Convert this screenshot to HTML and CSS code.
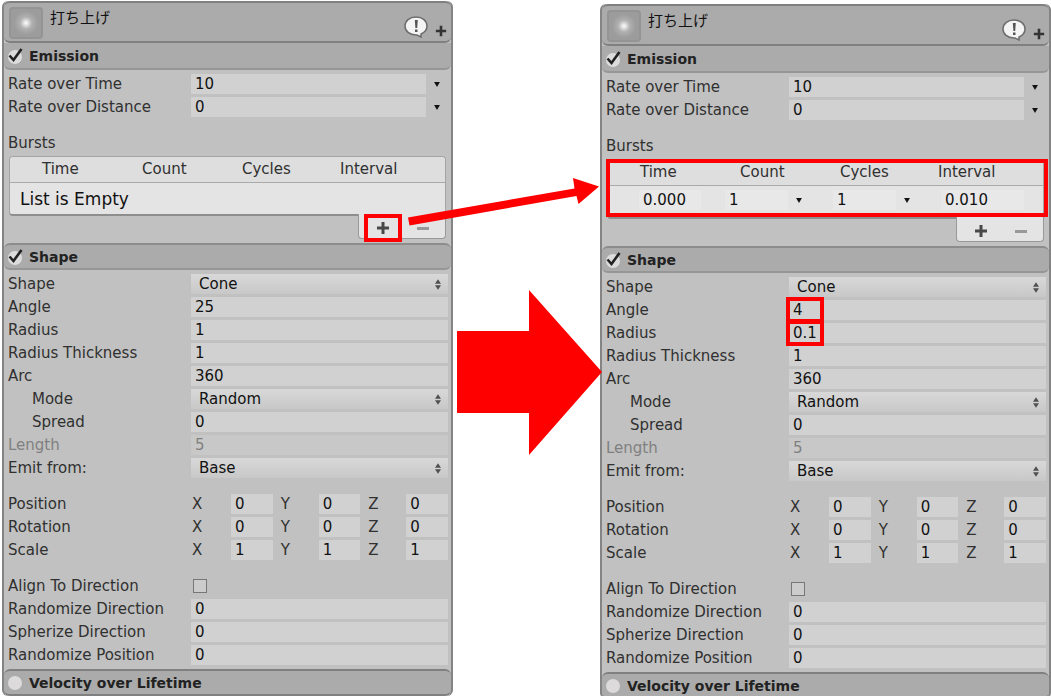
FILE: index.html
```
<!DOCTYPE html>
<html lang="ja">
<head>
    <meta charset="utf-8">
    <title>打ち上げ</title>
    <meta name="viewport" content="width=device-width, initial-scale=1">
    <link rel="stylesheet" href="styles.css">
</head>
<body>
    <svg class="defs" aria-hidden="true">
        <symbol id="updown" viewBox="0 0 7 12"><path d="M3.5 0 7 5H0zM0 7h7L3.5 12z"/></symbol>
        <symbol id="down" viewBox="0 0 7 6"><path d="M0 0h7L3.5 6z"/></symbol>
        <symbol id="plus" viewBox="0 0 14 14"><path d="M5.5 1h3v4.5H13v3H8.5V13h-3V8.5H1v-3h4.5z"/></symbol>
        <symbol id="minus" viewBox="0 0 14 14"><path d="M1 6h12v3H1z"/></symbol>
        <symbol id="info" viewBox="0 0 24 22">
            <path d="M12 1C5.500 1 1 5 1 10s4.500 9 11 9h1l4 2v-3c3.500-1.500 6-4.500 6-8 0-5-4.500-9-11-9z" fill="#f4f4f4" stroke="#6c6c6c" stroke-width="1.500"/>
            <path d="M10.800 4h3l-.6 8h-1.800zM11 13.500h2.500V16H11z" fill="#555"/>
        </symbol>
        <symbol id="check" viewBox="0 0 16 16">
            <circle cx="7" cy="9" r="7" fill="#dcdcdc"/>
            <path d="M1.500 7.500 5.500 12 13.500 1" fill="none" stroke="#222" stroke-width="2.600"/>
        </symbol>
    </svg>

    <main class="compare">
    <section class="panel">
        <header class="head">
            <div class="thumb"></div>
            <h1>打ち上げ</h1>
            <button type="button" class="icon" aria-label="Info"><svg width="24" height="22"><use href="#info"/></svg></button>
            <button type="button" class="icon add" aria-label="Add module"><svg width="12" height="12"><use href="#plus"/></svg></button>
        </header>

        <label class="title"><input type="checkbox" checked><svg class="mark"><use href="#check"/></svg>Emission</label>
        <div class="rows">
            <div class="row"><label for="a-rate">Rate over Time</label><div class="curve"><input id="a-rate" value="10"><button type="button" class="icon" aria-label="Mode"><svg width="6" height="5"><use href="#down"/></svg></button></div></div>
            <div class="row"><label for="a-dist">Rate over Distance</label><div class="curve"><input id="a-dist" value="0"><button type="button" class="icon" aria-label="Mode"><svg width="6" height="5"><use href="#down"/></svg></button></div></div>
            <div class="row space">Bursts</div>
        </div>
        <div class="bursts">
            <table>
                <thead><tr><th>Time</th><th>Count</th><th>Cycles</th><th>Interval</th></tr></thead>
                <tbody><tr class="empty"><td>List is Empty</td></tr></tbody>
            </table>
            <div class="buttons">
                <button type="button" class="icon marked" aria-label="Add burst"><svg width="14" height="14"><use href="#plus"/></svg></button>
                <button type="button" class="icon off" aria-label="Remove burst"><svg width="14" height="14"><use href="#minus"/></svg></button>
            </div>
        </div>

        <label class="title"><input type="checkbox" checked><svg class="mark"><use href="#check"/></svg>Shape</label>
        <div class="rows">
            <div class="row"><label for="a-shape">Shape</label><div class="select"><select id="a-shape"><option>Cone</option></select><svg width="6" height="11"><use href="#updown"/></svg></div></div>
            <div class="row"><label for="a-angle">Angle</label><input id="a-angle" value="25"></div>
            <div class="row"><label for="a-radius">Radius</label><input id="a-radius" value="1"></div>
            <div class="row"><label for="a-thick">Radius Thickness</label><input id="a-thick" value="1"></div>
            <div class="row"><label for="a-arc">Arc</label><input id="a-arc" value="360"></div>
            <div class="row indent"><label for="a-mode">Mode</label><div class="select"><select id="a-mode"><option>Random</option></select><svg width="6" height="11"><use href="#updown"/></svg></div></div>
            <div class="row indent"><label for="a-spread">Spread</label><input id="a-spread" value="0"></div>
            <div class="row disabled"><label for="a-length">Length</label><input id="a-length" value="5" disabled></div>
            <div class="row"><label for="a-emit">Emit from:</label><div class="select"><select id="a-emit"><option>Base</option></select><svg width="6" height="11"><use href="#updown"/></svg></div></div>

            <div class="row space"><span>Position</span><div class="vector"><label for="a-px">X</label><input id="a-px" value="0"><label for="a-py">Y</label><input id="a-py" value="0"><label for="a-pz">Z</label><input id="a-pz" value="0"></div></div>
            <div class="row"><span>Rotation</span><div class="vector"><label for="a-rx">X</label><input id="a-rx" value="0"><label for="a-ry">Y</label><input id="a-ry" value="0"><label for="a-rz">Z</label><input id="a-rz" value="0"></div></div>
            <div class="row"><span>Scale</span><div class="vector"><label for="a-sx">X</label><input id="a-sx" value="1"><label for="a-sy">Y</label><input id="a-sy" value="1"><label for="a-sz">Z</label><input id="a-sz" value="1"></div></div>

            <div class="row space"><label for="a-align">Align To Direction</label><input type="checkbox" class="box" id="a-align"></div>
            <div class="row"><label for="a-rdir">Randomize Direction</label><input id="a-rdir" value="0"></div>
            <div class="row"><label for="a-sdir">Spherize Direction</label><input id="a-sdir" value="0"></div>
            <div class="row"><label for="a-rpos">Randomize Position</label><input id="a-rpos" value="0"></div>
        </div>

        <label class="title last"><input type="checkbox"><span class="mark dot"></span>Velocity over Lifetime</label>
    </section>

    <div class="between">
        <svg class="arrows" width="200" height="460" viewBox="0 0 200 460" aria-hidden="true">
            <path d="M1 217.500 167.500 188.500 166 178 192 186.500 171.500 204 169.500 196 2.500 225.500z"/>
            <path d="M50 331h72v-41l73 82-73 83v-42H50z"/>
        </svg>
    </div>

    <section class="panel after">
        <header class="head">
            <div class="thumb"></div>
            <h1>打ち上げ</h1>
            <button type="button" class="icon" aria-label="Info"><svg width="24" height="22"><use href="#info"/></svg></button>
            <button type="button" class="icon add" aria-label="Add module"><svg width="12" height="12"><use href="#plus"/></svg></button>
        </header>

        <label class="title"><input type="checkbox" checked><svg class="mark"><use href="#check"/></svg>Emission</label>
        <div class="rows">
            <div class="row"><label for="b-rate">Rate over Time</label><div class="curve"><input id="b-rate" value="10"><button type="button" class="icon" aria-label="Mode"><svg width="6" height="5"><use href="#down"/></svg></button></div></div>
            <div class="row"><label for="b-dist">Rate over Distance</label><div class="curve"><input id="b-dist" value="0"><button type="button" class="icon" aria-label="Mode"><svg width="6" height="5"><use href="#down"/></svg></button></div></div>
            <div class="row space">Bursts</div>
        </div>
        <div class="bursts marked">
            <table>
                <thead><tr><th>Time</th><th>Count</th><th>Cycles</th><th>Interval</th></tr></thead>
                <tbody><tr class="burst">
                    <td><input value="0.000" aria-label="Time"></td>
                    <td><input value="1" aria-label="Count"><button type="button" class="icon" aria-label="Count mode"><svg width="6" height="5"><use href="#down"/></svg></button></td>
                    <td><input value="1" aria-label="Cycles"><button type="button" class="icon" aria-label="Cycles mode"><svg width="6" height="5"><use href="#down"/></svg></button></td>
                    <td><input value="0.010" aria-label="Interval"></td>
                </tr></tbody>
            </table>
            <div class="buttons">
                <button type="button" class="icon" aria-label="Add burst"><svg width="14" height="14"><use href="#plus"/></svg></button>
                <button type="button" class="icon off" aria-label="Remove burst"><svg width="14" height="14"><use href="#minus"/></svg></button>
            </div>
        </div>

        <label class="title"><input type="checkbox" checked><svg class="mark"><use href="#check"/></svg>Shape</label>
        <div class="rows">
            <div class="row"><label for="b-shape">Shape</label><div class="select"><select id="b-shape"><option>Cone</option></select><svg width="6" height="11"><use href="#updown"/></svg></div></div>
            <div class="row"><label for="b-angle">Angle</label><div class="value marked"><input id="b-angle" value="4"></div></div>
            <div class="row"><label for="b-radius">Radius</label><div class="value marked"><input id="b-radius" value="0.1"></div></div>
            <div class="row"><label for="b-thick">Radius Thickness</label><input id="b-thick" value="1"></div>
            <div class="row"><label for="b-arc">Arc</label><input id="b-arc" value="360"></div>
            <div class="row indent"><label for="b-mode">Mode</label><div class="select"><select id="b-mode"><option>Random</option></select><svg width="6" height="11"><use href="#updown"/></svg></div></div>
            <div class="row indent"><label for="b-spread">Spread</label><input id="b-spread" value="0"></div>
            <div class="row disabled"><label for="b-length">Length</label><input id="b-length" value="5" disabled></div>
            <div class="row"><label for="b-emit">Emit from:</label><div class="select"><select id="b-emit"><option>Base</option></select><svg width="6" height="11"><use href="#updown"/></svg></div></div>

            <div class="row space"><span>Position</span><div class="vector"><label for="b-px">X</label><input id="b-px" value="0"><label for="b-py">Y</label><input id="b-py" value="0"><label for="b-pz">Z</label><input id="b-pz" value="0"></div></div>
            <div class="row"><span>Rotation</span><div class="vector"><label for="b-rx">X</label><input id="b-rx" value="0"><label for="b-ry">Y</label><input id="b-ry" value="0"><label for="b-rz">Z</label><input id="b-rz" value="0"></div></div>
            <div class="row"><span>Scale</span><div class="vector"><label for="b-sx">X</label><input id="b-sx" value="1"><label for="b-sy">Y</label><input id="b-sy" value="1"><label for="b-sz">Z</label><input id="b-sz" value="1"></div></div>

            <div class="row space"><label for="b-align">Align To Direction</label><input type="checkbox" class="box" id="b-align"></div>
            <div class="row"><label for="b-rdir">Randomize Direction</label><input id="b-rdir" value="0"></div>
            <div class="row"><label for="b-sdir">Spherize Direction</label><input id="b-sdir" value="0"></div>
            <div class="row"><label for="b-rpos">Randomize Position</label><input id="b-rpos" value="0"></div>
        </div>

        <label class="title last"><input type="checkbox"><span class="mark dot"></span>Velocity over Lifetime</label>
    </section>
    </main>
</body>
</html>
```
FILE: styles.css
```
*,
*::after {
    box-sizing: border-box;
}

body {
    margin: 0;
    background-color: #fff;
    color: #303030;
    font-family: "DejaVu Sans", "Noto Sans CJK JP", sans-serif;
    font-size: 15px;
    line-height: 20px;
}

.defs {
    position: absolute;
    width: 0;
    height: 0;
}

.compare {
    display: grid;
    grid-template-columns: 1fr 147px 1fr;
    align-items: start;
    padding: 1px 0 0 2px;
}

.panel {
    background-color: #c1c1c1;
    border: 2px solid #848484;
    border-width: 0 2px;
    border-radius: 6px;
}

.after {
    margin-top: 3px;
}

/* header */

.head {
    display: flex;
    align-items: flex-start;
    height: 42px;
    padding: 4px 4px 0 5px;
    background-color: #ababab;
    border: 2px solid #808080;
    border-width: 2px 0;
    border-radius: 6px;
}

.thumb {
    width: 34px;
    height: 32px;
    margin-right: 7px;
    border: 2px solid #949494;
    border-radius: 4px;
    background: radial-gradient(circle, #fff 0, #e4e4e4 2px, #b0b0b0 6px, #9c9c9c 12px);
}

h1 {
    flex: 1;
    margin: 0;
    color: #111;
    font-family: "Noto Sans CJK JP", sans-serif;
    font-size: 15px;
    font-weight: normal;
    line-height: 20px;
}

.icon {
    display: flex;
    align-items: center;
    justify-content: center;
    padding: 0;
    border: none;
    background: none;
    color: #111;
    cursor: pointer;
}

.icon svg {
    fill: currentColor;
}

.head .icon {
    height: 22px;
    margin-top: 9px;
    color: #333;
}

.head .add {
    margin: 13px 0 0 7px;
}

/* module titles */

.title {
    display: flex;
    align-items: center;
    height: 27px;
    padding-left: 4px;
    background-color: #ababab;
    border-bottom: 2px solid #969696;
    border-radius: 0 0 6px 6px;
    color: #222;
    font-size: 14px;
    font-weight: bold;
}

.bursts + .title {
    border-top: 2px solid #8c8c8c;
    border-radius: 6px;
}

.title.last {
    border: 2px solid #808080;
    border-width: 2px 0;
    border-radius: 6px;
}

.title input {
    position: absolute;
    width: 16px;
    opacity: 0;
}

.mark {
    width: 16px;
    height: 16px;
    margin-right: 5px;
}

.dot {
    width: 14px;
    height: 14px;
    margin-right: 7px;
    border-radius: 50%;
    background-color: #dcdada;
}

/* property rows */

.rows {
    display: grid;
    gap: 3px;
    padding: 4px 3px 4px 4px;
}

.row {
    display: grid;
    grid-template-columns: 183px minmax(0, 1fr);
    height: 20px;
}

.space {
    margin-top: 13px;
}

.indent label {
    padding-left: 24px;
}

input,
select {
    width: 100%;
    min-width: 0;
    height: 20px;
    margin: 0;
    padding: 0 4px;
    border: none;
    border-radius: 0;
    background-color: #d1d1d1;
    color: #111;
    font: inherit;
    outline: none;
}

.disabled,
.disabled input {
    color: #808080;
}

.disabled input {
    background-color: #c8c8c8;
}

.curve {
    display: grid;
    grid-template-columns: minmax(0, 1fr) 22px;
}

.select {
    display: flex;
    align-items: center;
    padding-right: 7px;
    background: linear-gradient(#d8d8d8, #c8c8c8);
}

.select select {
    flex: 1;
    padding-left: 8px;
    appearance: none;
    background: none;
}

.select svg {
    fill: #505050;
}

.vector {
    display: grid;
    grid-template-columns: 40px 1fr 46px 1fr 46px 1fr;
}

.vector label {
    padding-left: 8px;
}

.vector label:first-child {
    padding-left: 1px;
}

.box {
    width: 14px;
    height: 14px;
    margin: 3px 2px;
    padding: 0;
    appearance: none;
    background-color: #ccc;
    border: 1px solid #777;
}

/* bursts list */

.bursts {
    padding: 0 5px 4px;
}

.rows + .bursts {
    margin-top: -1px;
}

.bursts table {
    display: block;
    background-color: #e4e4e4;
    border: 1px solid #a4a4a4;
    border-bottom: 2px solid #8e8e8e;
    border-radius: 4px;
}

.bursts thead,
.bursts tbody {
    display: block;
}

.bursts thead tr {
    display: grid;
    grid-template-columns: 100px 100px 98px 1fr;
    height: 26px;
    padding-left: 32px;
    border-bottom: 1px solid #aaa;
    background-color: #dedede;
    border-radius: 4px 4px 0 0;
}

.bursts th {
    padding: 2px 0 0;
    font-weight: normal;
    text-align: left;
}

.bursts td {
    padding: 0;
}

.empty {
    display: block;
    padding: 6px 10px 5px;
    color: #111;
    font-size: 17px;
}

.empty td {
    display: block;
}

.burst {
    display: grid;
    grid-template-columns: 62px 84px 84px 83px;
    column-gap: 24px;
    padding: 4px 0 7px 31px;
}

.burst td {
    display: grid;
    grid-template-columns: minmax(0, 1fr) 21px;
}

.burst td:first-child,
.burst td:last-child {
    display: block;
}

.burst input {
    background-color: #e8e8e8;
}

.buttons {
    display: flex;
    justify-content: space-between;
    width: 88px;
    height: 25px;
    margin: -2px 0 0 auto;
    padding: 0 15px 0 17px;
    background-color: #e4e4e4;
    border: 1px solid #999;
    border-top: none;
    border-radius: 0 0 4px 4px;
}

.buttons .icon {
    height: 28px;
    color: #484848;
}

.buttons .off {
    color: #999;
}

/* red callouts drawn over the panels */

.marked {
    position: relative;
}

.marked::after {
    content: "";
    position: absolute;
    border: 4px solid #f00;
    pointer-events: none;
}

.buttons .marked::after {
    inset: 0 -12px;
}

.bursts.marked::after {
    top: 0;
    right: 1px;
    left: 4px;
    height: 58px;
}

.value.marked::after {
    top: -3px;
    left: -3px;
    width: 38px;
    height: 26px;
}

.between {
    position: relative;
}

.arrows {
    position: absolute;
    top: -1px;
    left: -46px;
    fill: #f00;
}
```
